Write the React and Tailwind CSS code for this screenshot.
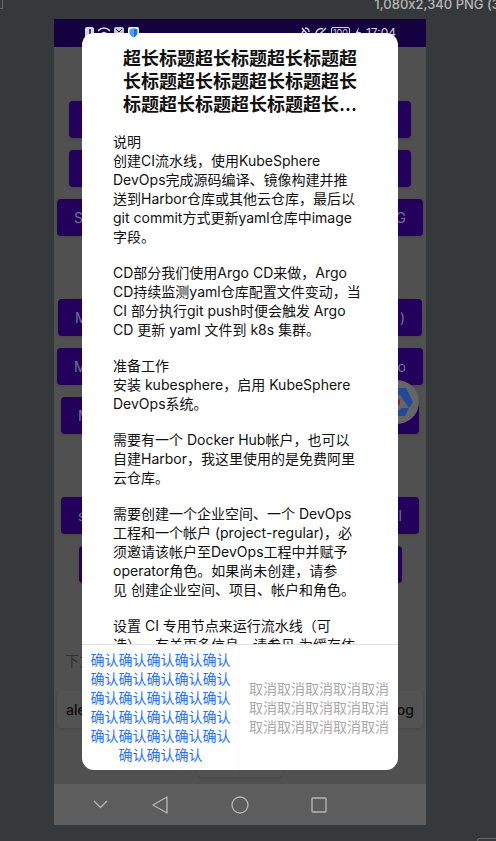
const sans = "font-['Inter','Noto_Sans_CJK_SC',sans-serif]";

const buttonGroups = [
  [
    { id: 'a1', width: 'w-[342px]', start: '', end: '' },
    { id: 'a2', width: 'w-[342px]', start: '', end: '' },
    { id: 'a3', width: 'w-[366px]', start: 'S', end: 'G' },
  ],
  [
    { id: 'b1', width: 'w-[364px]', start: 'M', end: ')' },
    { id: 'b2', width: 'w-[366px]', start: 'M', end: 'o' },
    { id: 'b3', width: 'w-[358px]', start: 'M', end: '' },
  ],
  [
    { id: 'c1', width: 'w-[358px]', start: 's', end: 'l' },
    { id: 'c2', width: 'w-[323px]', start: '', end: '' },
  ],
];

const paragraphs = [
  ['说明', '创建CI流水线，使用KubeSphere', 'DevOps完成源码编译、镜像构建并推', '送到Harbor仓库或其他云仓库，最后以', 'git commit方式更新yaml仓库中image', '字段。'],
  ['CD部分我们使用Argo CD来做，Argo', 'CD持续监测yaml仓库配置文件变动，当', 'CI 部分执行git push时便会触发 Argo', 'CD 更新 yaml 文件到 k8s 集群。'],
  ['准备工作', '安装 kubesphere，启用 KubeSphere', 'DevOps系统。'],
  ['需要有一个 Docker Hub帐户，也可以', '自建Harbor，我这里使用的是免费阿里', '云仓库。'],
  ['需要创建一个企业空间、一个 DevOps', '工程和一个帐户 (project-regular)，必', '须邀请该帐户至DevOps工程中并赋予', 'operator角色。如果尚未创建，请参', '见 创建企业空间、项目、帐户和角色。'],
  ['设置 CI 专用节点来运行流水线（可', '选）。有关更多信息，请参见 为缓存依'],
];

function StatusBar() {
  return (
    <div className="flex h-7 items-start justify-between bg-[#140040] pl-[31px] pr-[30px] pt-2 text-[#d6cfe0]">
      <div className="flex gap-1">
        <svg width="9" height="12" viewBox="0 0 9 12"><rect width="9" height="12" rx="2" fill="#d9d3e2" /><path d="M5 2v5" stroke="#140040" strokeWidth="1.5" /></svg>
        <svg width="12" height="12" viewBox="0 0 12 12" fill="none" stroke="currentColor" strokeWidth="1.5"><path d="M0 4c3-4 9-4 12 0M3 7c2-2 4-2 6 0" /></svg>
        <svg width="10" height="12" viewBox="0 0 10 12"><rect width="10" height="10" rx="2" fill="#c9c3d4" /><path d="M2 2l3 3 3-3" stroke="#140040" fill="none" /></svg>
        <svg className="relative z-10" width="11" height="12" viewBox="0 0 11 12"><rect width="11" height="12" rx="2" fill="#fff" /><path d="M5.500 1l4 1.500v3c0 2.500-2 4-4 5z" fill="#1d6ff2" /><path d="M5.500 1l-4 1.500v3c0 2.500 2 4 4 5z" fill="#3fa0ff" /></svg>
      </div>
      <div className="flex gap-1">
        <svg width="10" height="12" viewBox="0 0 10 12" fill="none" stroke="currentColor" strokeWidth="1.5"><path d="M1 1l8 9M4 1c3 0 4 2 4 4M1 6l2-3" /></svg>
        <svg width="12" height="12" viewBox="0 0 12 12" fill="none" stroke="currentColor" strokeWidth="1.5"><path d="M8 2a5 5 0 1 0 3 4M5 7l6-6" /></svg>
        <span className="h-3 rounded-xs border border-current px-px text-[9px] leading-[10px]">100</span>
        <svg width="8" height="12" viewBox="0 0 8 12" fill="currentColor"><path d="M5 0L1 7h3l-1 5 4-7H4z" /></svg>
        <span className="text-[12px] leading-3">17:04</span>
      </div>
    </div>
  );
}

function FloatingLogo() {
  return (
    <svg className="absolute right-[7px] top-[361px]" width="44" height="44" viewBox="0 0 44 44" aria-hidden="true">
      <circle cx="22" cy="22" r="22" fill="#656565" />
      <path d="M20 8h11l7 14-4 6-9-13h-5z" fill="#234a99" />
      <path d="M20 30h5l1-2h8l-4 8H20z" fill="#234a99" />
      <circle cx="21" cy="22" r="4" fill="#801c40" />
    </svg>
  );
}

function NavigationBar() {
  const style = 'flex items-center justify-center';
  return (
    <nav className="flex h-[41px] shrink-0 items-center bg-[#5d5d5d] pl-[37px] text-[#b4b4b4]">
      <button className={`${style} w-[19px]`} aria-label="Hide"><svg width="15" height="9" viewBox="0 0 15 9" fill="none" stroke="currentColor" strokeWidth="1.3"><path d="M1 1l6.500 6.500L14 1" /></svg></button>
      <button className={`${style} ml-10 w-5`} aria-label="Back"><svg width="17" height="18" viewBox="0 0 17 18" fill="none" stroke="currentColor" strokeWidth="1.4" strokeLinejoin="round"><path d="M15 1v16L1 9z" /></svg></button>
      <button className={`${style} ml-[60px] w-5`} aria-label="Home"><svg width="18" height="18" viewBox="0 0 18 18" fill="none" stroke="currentColor" strokeWidth="1.3"><circle cx="9" cy="9" r="8" /></svg></button>
      <button className={`${style} ml-[59px] w-5`} aria-label="Recent"><svg width="16" height="16" viewBox="0 0 16 16" fill="none" stroke="currentColor" strokeWidth="1.4"><rect x="1" y="1" width="14" height="14" rx="1" /></svg></button>
    </nav>
  );
}

function Dialog() {
  return (
    <section role="dialog" aria-modal="true" aria-labelledby="dialog-title" className="absolute inset-x-7 bottom-[55px] top-[14px] flex flex-col overflow-hidden rounded-xl bg-white">
      <h1 id="dialog-title" className="px-8 pt-[14px] text-center text-[18px] font-bold leading-[23px] text-[#111]">
        超长标题超长标题超长标题超<br />长标题超长标题超长标题超长<br />标题超长标题超长标题超长...
      </h1>
      <div className="mt-4 flex min-h-0 flex-1 flex-col gap-[17px] overflow-y-auto whitespace-nowrap pl-[31px] text-[14px] leading-[19px] text-[#111] [scrollbar-width:none] [text-spacing-trim:space-all]">
        {paragraphs.map((lines) => (
          <p key={lines[0]} className="shrink-0">
            {lines.map((line) => <span key={line} className="block">{line}</span>)}
          </p>
        ))}
      </div>
      <div className="grid shrink-0 grid-cols-2 border-t border-[#e0e0e0] text-[14px] leading-[19px]">
        <button className="border-r border-[#fafafa] px-1 pb-[6px] pt-[5px] text-[#1f71ff]">
          {[5, 5, 5, 5, 5, 3].map((count, i) => <span key={i} className="block">{'确认'.repeat(count)}</span>)}
        </button>
        <button className="px-1 text-[#a9a9a9]">
          {[5, 5, 5].map((count, i) => <span key={i} className="block">{'取消'.repeat(count)}</span>)}
        </button>
      </div>
    </section>
  );
}

export default function App() {
  return (
    <main className={`${sans} flex h-screen min-h-[640px] flex-col overflow-hidden bg-[#36393b]`}>
      <header className="flex h-[19px] shrink-0 items-start justify-between overflow-hidden text-[13px] font-medium leading-[8px] text-[#b4b6b7]">
        <span className="h-[9px] w-[3px] border-b border-r border-[#65686a]" />
        <span className="-mr-1 whitespace-nowrap [font-feature-settings:'calt'_0]">1,080x2,340 PNG (3</span>
      </header>
      <div className="relative ml-[54px] mr-[70px] flex min-h-0 flex-1 flex-col overflow-hidden bg-[#505050]">
        <StatusBar />
        <div className="flex min-h-0 flex-1 flex-col items-center overflow-hidden pt-[54px]">
          <div className="flex flex-col gap-[63px]">
            {buttonGroups.map((group) => (
              <div key={group[0].id} className="flex flex-col items-center gap-3">
                {group.map((item) => (
                  <button key={item.id} aria-label={item.id} className={`${item.width} flex h-[37px] items-center justify-between rounded bg-[#22005c] px-[17px] text-[14px] text-[#77708c] shadow`}>
                    <span>{item.start}</span><span>{item.end}</span>
                  </button>
                ))}
              </div>
            ))}
          </div>
          <p className="mt-[68px] self-start pl-[11px] text-[14px] leading-5 text-[#303030]">下方</p>
          <button className="mt-5 flex h-[37px] w-[366px] shrink-0 items-center justify-between rounded-sm bg-[#525252] px-[9px] text-[14px] font-medium text-[#0c0c0c] shadow">
            <span>ale</span><span>og</span>
          </button>
          <button aria-label="More" className="mt-3 h-[37px] w-[84px] shrink-0 rounded-sm bg-[#525252] shadow" />
        </div>
        <NavigationBar />
        <FloatingLogo />
        <Dialog />
      </div>
      <footer className="flex h-4 shrink-0 items-end justify-end">
        <span className="h-[3px] w-[19px] rounded-tl-sm border-l border-t border-[#65686a]" />
      </footer>
    </main>
  );
}
